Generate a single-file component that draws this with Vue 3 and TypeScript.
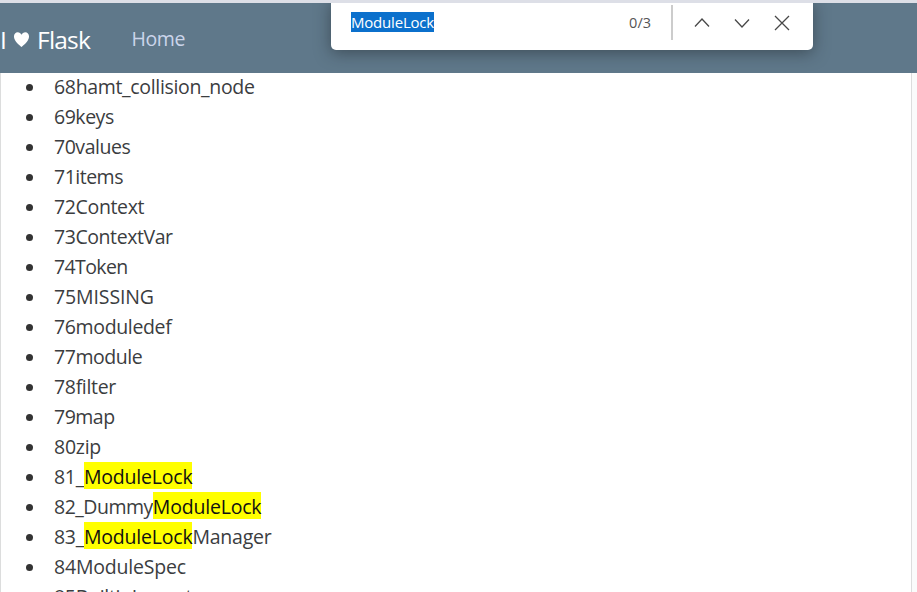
<script setup lang="ts">
interface Part {
  text: string
  hit?: boolean
  spacing: number
}

const query = 'ModuleLock'

// Each name with its tracking in pixels.
const names: [string, number][] = [
  ['hamt_collision_node', -0.33],
  ['keys', -0.47],
  ['values', -0.47],
  ['items', -0.5],
  ['Context', -0.35],
  ['ContextVar', -0.43],
  ['Token', -0.6],
  ['MISSING', -0.12],
  ['moduledef', -0.35],
  ['module', -0.45],
  ['filter', -0.33],
  ['map', -0.5],
  ['zip', -0.25],
  ['_ModuleLock', -0.3],
  ['_DummyModuleLock', -0.5],
  ['_ModuleLockManager', -0.3],
  ['ModuleSpec', -0.2],
  ['BuiltinImporter', -0.3],
]

const rows: Part[][] = names.map(([name, spacing], i) => {
  const label = `${68 + i}${name}`
  const at = label.indexOf(query)
  if (at < 0) return [{ text: label, spacing }]
  return [
    { text: label.slice(0, at), spacing },
    { text: query, hit: true, spacing: -0.2 },
    { text: label.slice(at + query.length), spacing: -0.25 },
  ].filter((p) => p.text)
})
</script>

<template>
  <div class="page">
    <header class="navbar">
      <span class="brand">
        <span>I</span>
        <svg class="heart" viewBox="0 0 18 18"><path d="M9 17C7.8 15.6 1 11 1 5.8 1 3 2.8 1.3 5 1.3c1.8 0 3.2 1 4 2.7.8-1.7 2.2-2.7 4-2.7 2.2 0 4 1.7 4 4.5C17 11 10.200 15.600 9 17Z" /></svg>
        <span>Flask</span>
      </span>
      <a class="link">Home</a>
    </header>
    <main class="content">
      <ul class="list">
        <li v-for="(parts, i) in rows" :key="i" class="row">
          <span class="label"><span v-for="(p, j) in parts" :key="j" :class="{ hit: p.hit }" :style="{ letterSpacing: `${p.spacing}px` }">{{ p.text }}</span></span>
        </li>
      </ul>
    </main>
    <div class="find">
      <span class="field"><span class="selected">{{ query }}</span></span>
      <span class="count">0/3</span>
      <span class="rule"></span>
      <svg class="icon" viewBox="0 0 18 18"><path d="M2 13.500 9 6 16 13.500" /></svg>
      <svg class="icon" viewBox="0 0 18 18"><path d="M2 6.500 9 14 16 6.500" /></svg>
      <svg class="icon" viewBox="0 0 18 18"><path d="M2 3 16 17M16 3 2 17" /></svg>
    </div>
  </div>
</template>

<style>
body {
  overflow: hidden;
}
</style>

<style scoped>
.page {
  position: relative;
  display: flex;
  flex-direction: column;
  box-sizing: border-box;
  width: 917px;
  height: 592px;
  overflow: hidden;
  border-top: 3px solid #dddfe7;
  background: #fafbfb;
  color: #3b3d3f;
  font-family: "Open Sans", "Noto Sans", sans-serif;
}
.navbar {
  display: flex;
  align-items: center;
  flex: none;
  box-sizing: border-box;
  height: 70px;
  padding-top: 3px;
  background: #5f788a;
}
.brand {
  display: flex;
  align-items: center;
  width: 131.5px;
  color: #fff;
  font-size: 24.5px;
  line-height: 36px;
  letter-spacing: -0.8px;
}
.heart {
  width: 17px;
  height: 17px;
  margin: 0 7px 0 7px;
  fill: #fff;
}
.link {
  margin-bottom: 2px;
  color: #cbd5ea;
  font-size: 19.5px;
  letter-spacing: -0.4px;
}
.content {
  flex: 1;
  box-sizing: border-box;
  width: 912px;
  overflow: hidden;
  border-left: 1px solid #dcdddd;
  border-right: 1px solid #dcdddd;
  background: #fff;
}
.list {
  margin: -1px 0 0;
  padding: 0 0 0 25px;
  list-style: none;
}
.row {
  display: flex;
  align-items: center;
  height: 30px;
}
.row::before {
  content: "";
  width: 7px;
  height: 7px;
  margin-right: 21px;
  border-radius: 50%;
  background: #333;
}
.label {
  display: flex;
  align-items: flex-start;
  height: 27px;
  font-size: 19.5px;
  line-height: 25px;
  white-space: pre;
}
.hit {
  margin-top: -2px;
  padding: 3px 0 1px;
  line-height: 23px;
  background: #ff0;
  color: #111;
}
.find {
  position: absolute;
  top: -3px;
  left: 331px;
  display: flex;
  align-items: center;
  box-sizing: border-box;
  width: 482px;
  height: 50px;
  padding: 0 22px 6px 20px;
  border-radius: 0 0 5px 5px;
  background: #fff;
  box-shadow: 0 3px 16px rgba(30, 35, 40, 0.5);
}
.field {
  display: flex;
  flex: 1;
}
.selected {
  height: 20px;
  background: #0b70cc;
  color: #fff;
  font-size: 15px;
  line-height: 21px;
  letter-spacing: -0.2px;
}
.count {
  color: #555;
  font-size: 14.5px;
}
.rule {
  width: 2px;
  height: 35px;
  margin: 0 20px 0 20px;
  background: #ccc;
}
.icon {
  width: 18px;
  height: 18px;
  fill: none;
  stroke: #484848;
  stroke-width: 1.3;
}
.icon + .icon {
  margin-left: 22px;
}
</style>
